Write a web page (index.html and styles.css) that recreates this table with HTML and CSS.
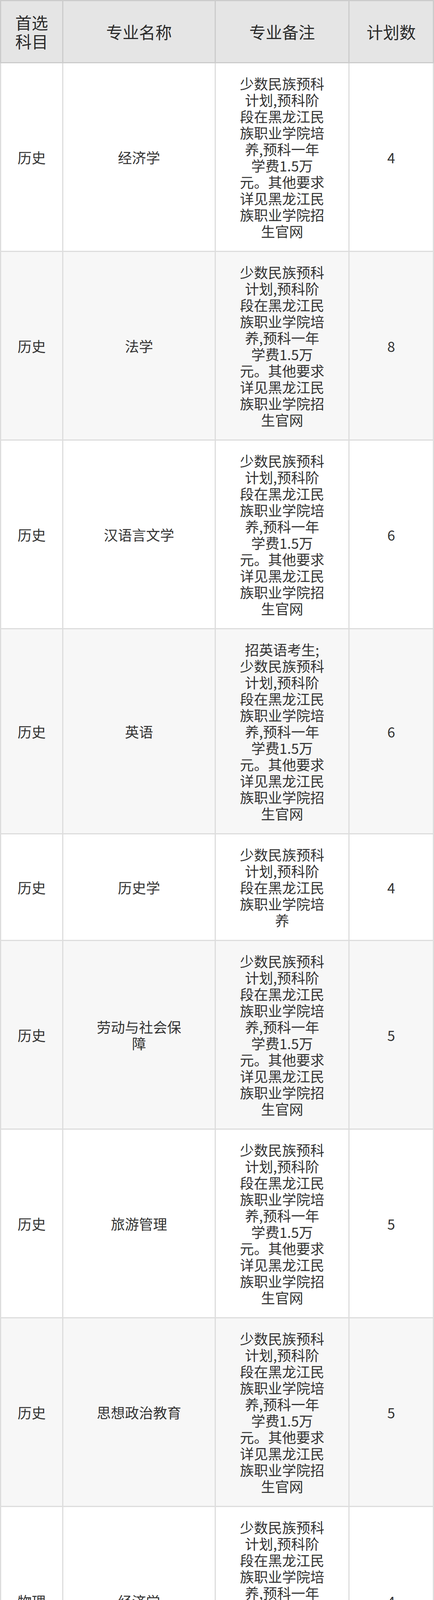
FILE: index.html
```html
<!DOCTYPE html>
<html lang="zh-CN">
<head>
<meta charset="utf-8">
<title>招生计划</title>
<link rel="stylesheet" href="styles.css">
</head>
<body>
<div class="plan">
  <div class="head">
    <div class="cell c1">首选科目</div>
    <div class="cell c2">专业名称</div>
    <div class="cell c3">专业备注</div>
    <div class="cell c4">计划数</div>
  </div>
  <div class="body">
    <div class="cell c1">历史</div><div class="cell c2">经济学</div><div class="cell c3">少数民族预科计划,预科阶段在黑龙江民族职业学院培养,预科一年学费1.5万元。其他要求详见黑龙江民族职业学院招生官网</div><div class="cell c4">4</div>

    <div class="cell c1 alt">历史</div><div class="cell c2 alt">法学</div><div class="cell c3 alt">少数民族预科计划,预科阶段在黑龙江民族职业学院培养,预科一年学费1.5万元。其他要求详见黑龙江民族职业学院招生官网</div><div class="cell c4 alt">8</div>

    <div class="cell c1">历史</div><div class="cell c2">汉语言文学</div><div class="cell c3">少数民族预科计划,预科阶段在黑龙江民族职业学院培养,预科一年学费1.5万元。其他要求详见黑龙江民族职业学院招生官网</div><div class="cell c4">6</div>

    <div class="cell c1 alt">历史</div><div class="cell c2 alt">英语</div><div class="cell c3 alt">招英语考生;少数民族预科计划,预科阶段在黑龙江民族职业学院培养,预科一年学费1.5万元。其他要求详见黑龙江民族职业学院招生官网</div><div class="cell c4 alt">6</div>

    <div class="cell c1">历史</div><div class="cell c2">历史学</div><div class="cell c3">少数民族预科计划,预科阶段在黑龙江民族职业学院培养</div><div class="cell c4">4</div>

    <div class="cell c1 alt">历史</div><div class="cell c2 alt">劳动与社会保障</div><div class="cell c3 alt">少数民族预科计划,预科阶段在黑龙江民族职业学院培养,预科一年学费1.5万元。其他要求详见黑龙江民族职业学院招生官网</div><div class="cell c4 alt">5</div>

    <div class="cell c1">历史</div><div class="cell c2">旅游管理</div><div class="cell c3">少数民族预科计划,预科阶段在黑龙江民族职业学院培养,预科一年学费1.5万元。其他要求详见黑龙江民族职业学院招生官网</div><div class="cell c4">5</div>

    <div class="cell c1 alt">历史</div><div class="cell c2 alt">思想政治教育</div><div class="cell c3 alt">少数民族预科计划,预科阶段在黑龙江民族职业学院培养,预科一年学费1.5万元。其他要求详见黑龙江民族职业学院招生官网</div><div class="cell c4 alt">5</div>

    <div class="cell c1">物理</div><div class="cell c2">经济学</div><div class="cell c3">少数民族预科计划,预科阶段在黑龙江民族职业学院培养,预科一年学费1.5万元。其他要求详见黑龙江民族职业学院招生官网</div><div class="cell c4">4</div>

    <div class="cell c1 alt">物理</div><div class="cell c2 alt">教育技术学</div><div class="cell c3 alt">少数民族预科计划,预科阶段在黑龙江民族职业学院培养,预科一年学费1.5万元。其他要求详见黑龙江民族职业学院招生官网</div><div class="cell c4 alt">3</div>

    <div class="cell c1">物理</div><div class="cell c2">人文地理与城乡规划</div><div class="cell c3">少数民族预科计划,预科阶段在黑龙江民族职业学院培养,预科一年学费1.5万元。其他要求详见黑龙江民族职业学院招生官网</div><div class="cell c4">8</div>

    <div class="cell c1 alt">物理</div><div class="cell c2 alt">数学与应用数学</div><div class="cell c3 alt">少数民族预科计划,预科阶段在黑龙江民族职业学院培养,预科一年学费1.5万元。其他要求详见黑龙江民族职业学院招生官网</div><div class="cell c4 alt">7</div>

    <div class="cell c1">物理</div><div class="cell c2">化学</div><div class="cell c3">少数民族预科计划,预科阶段在黑龙江民族职业学院培养,预科一年学费1.5万元。其他要求详见黑龙江民族职业学院招生官网</div><div class="cell c4">6</div>

    <div class="cell c1 alt">物理</div><div class="cell c2 alt">自然地理与资源环境</div><div class="cell c3 alt">少数民族预科计划,预科阶段在黑龙江民族职业学院培养,预科一年学费1.5万元。其他要求详见黑龙江民族职业学院招生官网</div><div class="cell c4 alt">4</div>

    <div class="cell c1">物理</div><div class="cell c2">生物科学</div><div class="cell c3">少数民族预科计划,预科阶段在黑龙江民族职业学院培养,预科一年学费1.5万元。其他要求详见黑龙江民族职业学院招生官网</div><div class="cell c4">8</div>
  </div>
</div>
</body>
</html>
```
FILE: styles.css
```css
html, body {
  margin: 0;
  padding: 0;
  background: #ffffff;
}

body {
  font-family: "Noto Sans CJK SC", "Noto Sans", sans-serif;
  color: #333333;
}

.plan {
  width: 1110px;
}

.head,
.body {
  display: grid;
  grid-template-columns: 156px 387px 339px 213px;
  column-gap: 3px;
  row-gap: 3px;
}

.head {
  background: #cccccc;
  padding: 3px;
}

.body {
  background: #dddddd;
  padding: 0 3px 3px 3px;
}

.cell {
  display: flex;
  align-items: center;
  justify-content: center;
  text-align: center;
  padding: 30px;
  background: #ffffff;
  font-size: 36px;
  line-height: 42px;
  word-break: break-all;
}

.head .cell {
  background: #e5e5e5;
  font-size: 42px;
  line-height: 48px;
  color: #2b2b2b;
}

.cell.alt {
  background: #f7f7f7;
}

.c2 {
  padding-left: 78px;
  padding-right: 78px;
}

.c3 {
  padding-left: 60px;
  padding-right: 60px;
}
```
